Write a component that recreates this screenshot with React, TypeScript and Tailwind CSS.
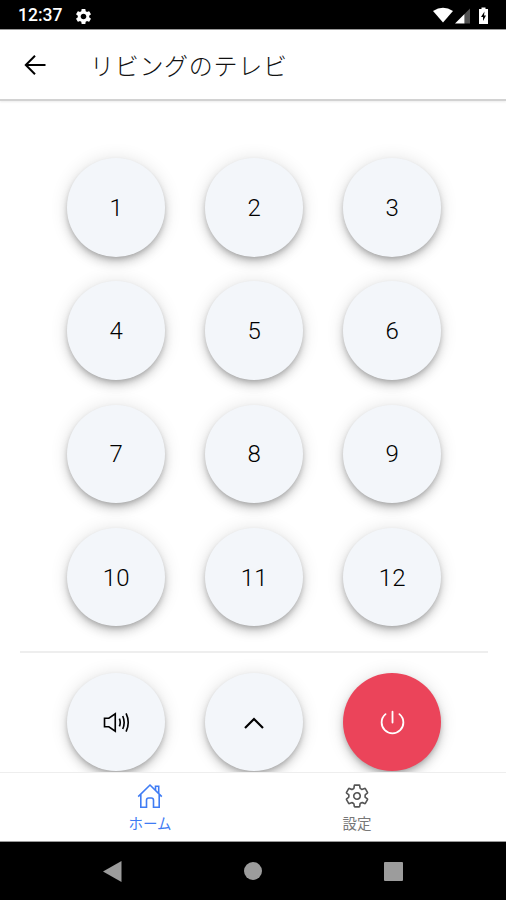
import type { ReactNode } from "react";
import { IoPowerOutline, IoSettingsOutline } from "react-icons/io5";
import { MdSettings } from "react-icons/md";

const channels = ["1", "2", "3", "4", "5", "6", "7", "8", "9", "10", "11", "12"];

function StatusBar() {
  return (
    <div className="h-[29px] shrink-0 bg-black text-white flex items-center pt-[3px] pl-[18px] pr-4">
      <span className="text-[17.500px] leading-none font-medium">12:37</span>
      <MdSettings className="ml-3 size-[19px]" />
      <svg className="ml-auto" width="58" height="20" viewBox="0 0 58 20" fill="currentColor">
        <path d="M1 5Q11 -1.500 21 5L11 16.500Z" />
        <path d="M23 17.500 32.500 8V17.500Z" />
        <path d="M32.500 8 38 2.500V17.500H32.500Z" opacity="0.32" />
        <path d="M47 3H49.500V1.500h4V3h2.500V18h-9Z" />
        <path d="M52.500 5.500 49 11h2v4l3-5.500H52Z" fill="#000" />
      </svg>
    </div>
  );
}

function ArrowIcon() {
  return (
    <svg width="26" height="26" viewBox="0 0 26 26" fill="none" stroke="currentColor" strokeWidth="2">
      <path d="M23.500 13H4.500M13 3.800 3.800 13l9.200 9.200" />
    </svg>
  );
}

function VolumeIcon() {
  return (
    <svg width="27" height="23" viewBox="0 0 28 24" fill="none" stroke="currentColor" strokeWidth="1.700">
      <path d="M1.500 7.600H6L12.700 3v18L6 16.400H1.500Z" />
      <path d="M17 8q1.800 4 0 8M20.500 5.200q3 6.800 0 13.600M24 2.500q4.500 9.500 0 19" />
    </svg>
  );
}

function ChevronIcon() {
  return (
    <svg width="22" height="14" viewBox="0 0 22 14" fill="none" stroke="currentColor" strokeWidth="2.200">
      <path d="M2 12 11 3l9 9" />
    </svg>
  );
}

function HomeIcon() {
  return (
    <svg width="26" height="26" viewBox="0 0 26 26" fill="none" stroke="currentColor" strokeWidth="1.600">
      <path d="M1.200 13.600 13 2l11.800 11.600" />
      <path d="M3.800 11.500v12.700h5.700v-7q0-2.200 2.200-2.200h2.600q2.200 0 2.200 2.200v7h5.700V11.500M18.500 7V3.200h3.200v7" />
    </svg>
  );
}

function RemoteButton({
  children,
  label,
  danger = false,
}: {
  children: ReactNode;
  label?: string;
  danger?: boolean;
}) {
  return (
    <button
      type="button"
      aria-label={label}
      className={`size-[98.500px] rounded-full flex items-center justify-center pl-px pt-px text-[24px] font-[350] tracking-[0.2px] shadow-[0_3px_5px_-1px_rgba(0,0,0,0.2),0_6px_10px_0_rgba(0,0,0,0.14),0_1px_18px_0_rgba(0,0,0,0.12)] ${
        danger ? "bg-[#eb445a] text-white" : "bg-[#f3f6fa] text-black"
      }`}
    >
      {children}
    </button>
  );
}

export default function App() {
  return (
    <div className="w-[506px] h-[900px] flex flex-col overflow-hidden bg-white font-[Roboto,'Noto_Sans_CJK_JP',sans-serif]">
      <StatusBar />
      <header className="h-[72px] shrink-0 flex items-center pl-[22px] border-t border-t-[#999999] border-b-2 border-b-[#d2d2d2] shadow-[0_1px_2px_rgba(0,0,0,0.08)]">
        <button type="button" aria-label="戻る">
          <ArrowIcon />
        </button>
        <h1 className="ml-[42px] pt-[5px] text-[24px] font-light tracking-[0.700px] text-[#111111]">
          リビングのテレビ
        </h1>
      </header>

      <main className="flex-1 min-h-0 overflow-hidden px-5">
        <div className="grid grid-cols-[repeat(3,98.5px)] gap-x-[39.500px] gap-y-[24.800px] pt-[57px] pl-[46.500px] pb-[24.500px]">
          {channels.map((c) => (
            <RemoteButton key={c}>{c}</RemoteButton>
          ))}
        </div>
        <div className="border-t-2 border-[#eeeeee] mr-[-2px]" />
        <div className="grid grid-cols-[repeat(3,98.5px)] gap-x-[39.500px] pt-5 pl-[46.500px]">
          <RemoteButton label="音量">
            <VolumeIcon />
          </RemoteButton>
          <RemoteButton label="上">
            <ChevronIcon />
          </RemoteButton>
          <RemoteButton label="電源" danger>
            <IoPowerOutline className="size-[29px]" />
          </RemoteButton>
        </div>
      </main>

      <nav className="h-[70px] shrink-0 relative flex justify-center border-t border-[#eeeeee] border-b border-b-[#999999] bg-white text-[14.500px]">
        <a className="w-[207px] flex flex-col items-center pt-[10px] pl-px text-[#3f7cf4]">
          <HomeIcon />
          <span className="leading-5 mt-1.5">ホーム</span>
        </a>
        <a className="w-[207px] flex flex-col items-center pt-[10px] pl-px text-[#555555]">
          <IoSettingsOutline className="size-[26px]" />
          <span className="leading-5 mt-1.5 text-[#777777]">設定</span>
        </a>
      </nav>

      <div className="h-[58px] shrink-0 bg-black text-[#9c9c9c] flex items-center justify-between px-[103px]">
        <svg width="19" height="21" viewBox="0 0 19 21" fill="currentColor">
          <path d="M0 10.500 18.500 0v21Z" />
        </svg>
        <div className="size-[18px] rounded-full bg-[#9c9c9c]" />
        <div className="size-[19px] rounded-[1px] bg-[#9c9c9c]" />
      </div>
    </div>
  );
}
